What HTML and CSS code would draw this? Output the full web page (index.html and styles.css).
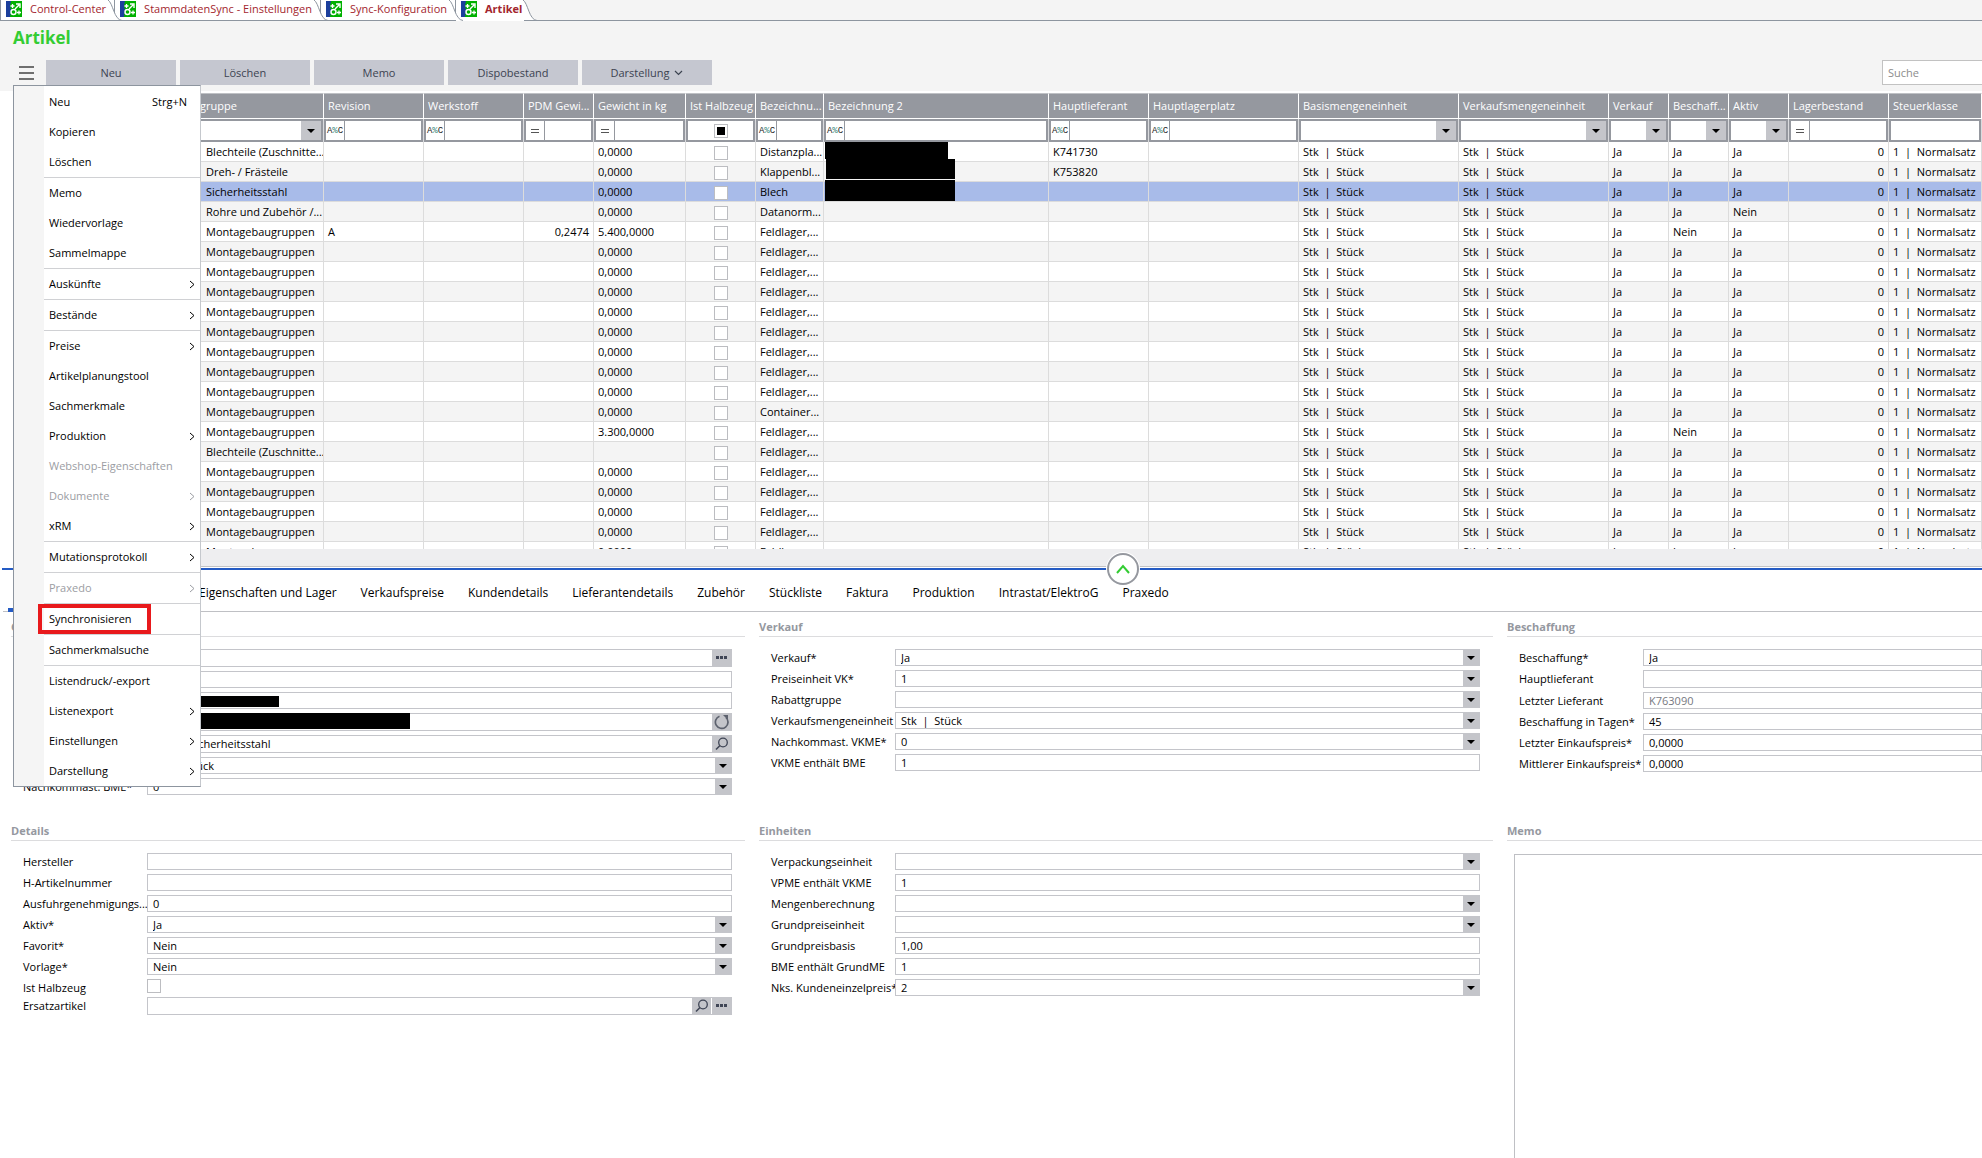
FILE: index.html
```html
<!DOCTYPE html>
<html lang="de">
<head>
    <meta charset="UTF-8">
    <title>Artikel</title>
    <link rel="stylesheet" href="styles.css">
</head>
<body>
<svg class="defs" aria-hidden="true">
    <symbol id="logo" viewBox="0 0 16 16">
        <rect width="16" height="16" fill="#00b000"/>
        <path d="M0 0h5l-1 5 1 4-1 7H0z" fill="#1c3f9c"/>
        <circle cx="7.500" cy="11" r="2.500" fill="none" stroke="#fff" stroke-width="1.400"/>
        <path d="M6.500 3v4M4.500 5h4M13 9.500v4M11 11.500h4" stroke="#fff" stroke-width="1.300"/>
        <path d="M9 8l4-4M10 3h4v4" fill="none" stroke="#fff" stroke-width="1.400"/>
    </symbol>
    <symbol id="slope" viewBox="0 0 14 21">
        <path d="M0 0C5 3 6 20 14 20H0z" fill="#fff"/>
        <path d="M0 0C5 3 6 20 14 20.500" fill="none" stroke="#8d959f"/>
    </symbol>
    <symbol id="chevron" viewBox="0 0 6 9">
        <path d="M1 1l4 3.500-4 3.500" fill="none" stroke="currentColor"/>
    </symbol>
    <symbol id="lens" viewBox="0 0 14 14">
        <circle cx="8" cy="5.500" r="4.300" fill="none" stroke="#3f4555" stroke-width="1.300"/>
        <path d="M5 8.500l-4 4" stroke="#3f4555" stroke-width="1.600"/>
    </symbol>
    <symbol id="dots" viewBox="0 0 12 4">
        <path d="M0 0h3v3H0zM4 0h3v3H4zM8 0h3v3H8z" fill="#3f4555"/>
    </symbol>
    <symbol id="reload" viewBox="0 0 16 16">
        <path d="M5.500 2.200a6.300 6.300 0 1 0 6.500 1.300" fill="none" stroke="#5d626e" stroke-width="1.700"/>
        <path d="M9 1h5v5z" fill="#5d626e"/>
    </symbol>
</svg>

<header>
    <nav class="tabs">
        <a href="#" class="tab"><svg class="logo"><use href="#logo"/></svg>Control-Center<svg class="slope"><use href="#slope"/></svg></a>
        <a href="#" class="tab"><svg class="logo"><use href="#logo"/></svg>StammdatenSync - Einstellungen<svg class="slope"><use href="#slope"/></svg></a>
        <a href="#" class="tab"><svg class="logo"><use href="#logo"/></svg>Sync-Konfiguration<svg class="slope"><use href="#slope"/></svg></a>
        <a href="#" class="tab active"><svg class="logo"><use href="#logo"/></svg>Artikel<svg class="slope"><use href="#slope"/></svg></a>
    </nav>
    <h1>Artikel</h1>
    <div class="toolbar">
        <button class="burger" aria-label="Menü"><span></span><span></span><span></span></button>
        <button>Neu</button>
        <button>Löschen</button>
        <button>Memo</button>
        <button>Dispobestand</button>
        <button>Darstellung <svg class="down" viewBox="0 0 9 6"><path d="M1 1l3.500 3.500L8 1" fill="none" stroke="currentColor" stroke-width="1.200"/></svg></button>
        <input class="search" type="text" placeholder="Suche" aria-label="Suche">
    </div>
</header>

<div class="menu" id="menu"></div>

<div class="grid">
    <table>
        <colgroup id="cols"></colgroup>
        <thead>
            <tr id="heads"></tr>
            <tr class="filter" id="filters"></tr>
        </thead>
        <tbody id="rows"></tbody>
    </table>
</div>

<div class="splitter">
    <button class="collapse" aria-label="Einklappen"><svg viewBox="0 0 14 10"><path d="M1 9l6-7 6 7" fill="none" stroke="#3c3" stroke-width="2"/></svg></button>
</div>

<nav class="pages">
    <a href="#" class="current">Allgemein</a>
    <a href="#">Eigenschaften und Lager</a>
    <a href="#">Verkaufspreise</a>
    <a href="#">Kundendetails</a>
    <a href="#">Lieferantendetails</a>
    <a href="#">Zubehör</a>
    <a href="#">Stückliste</a>
    <a href="#">Faktura</a>
    <a href="#">Produktion</a>
    <a href="#">Intrastat/ElektroG</a>
    <a href="#">Praxedo</a>
</nav>

<main id="main"></main>

<script>
    // name, width, filter type
    const columns = [
        ['gruppe', 311, 'combo'],
        ['Revision', 100, 'text'],
        ['Werkstoff', 100, 'text'],
        ['PDM Gewi...', 70, 'number'],
        ['Gewicht in kg', 92, 'number'],
        ['Ist Halbzeug', 70, 'check'],
        ['Bezeichnu...', 68, 'text'],
        ['Bezeichnung 2', 225, 'text'],
        ['Hauptlieferant', 100, 'text'],
        ['Hauptlagerplatz', 150, 'text'],
        ['Basismengeneinheit', 160, 'combo'],
        ['Verkaufsmengeneinheit', 150, 'combo'],
        ['Verkauf', 60, 'combo'],
        ['Beschaff...', 60, 'combo'],
        ['Aktiv', 60, 'combo'],
        ['Lagerbestand', 100, 'number'],
        ['Steuerklasse', 0, 'plain']
    ];

    const filters = {
        combo: name => `<div class="combo"><select aria-label="${name}"><option></option></select></div>`,
        text: name => `<div class="op"><button class="abc">A<i>%</i>C</button><input type="text" aria-label="${name}"></div>`,
        number: name => `<div class="op"><button class="eq" aria-label="gleich"></button><input type="text" aria-label="${name}"></div>`,
        check: name => `<div class="tri"><input type="checkbox" class="mixed" aria-label="${name}"></div>`,
        plain: name => `<div class="op"><input type="text" aria-label="${name}"></div>`
    };

    const m = 'Montagebaugruppen';
    const b = 'Blechteile (Zuschnitte...';
    const f = 'Feldlager,...';
    const articles = [
        {group: b, name: 'Distanzpla...', supplier: 'K741730', hide: 'first'},
        {group: 'Dreh- / Frästeile', name: 'Klappenbl...', supplier: 'K753820', hide: 'second'},
        {group: 'Sicherheitsstahl', name: 'Blech', hide: 'third', selected: true},
        {group: 'Rohre und Zubehör /...', name: 'Datanorm...', active: 'Nein'},
        {group: m, name: f, revision: 'A', pdm: '0,2474', kg: '5.400,0000', purchase: 'Nein'},
        {}, {}, {}, {}, {}, {}, {}, {},
        {name: 'Container...'},
        {kg: '3.300,0000', purchase: 'Nein'},
        {group: b, kg: ''},
        {}, {}, {}, {}, {}
    ];

    for (let [name, width, type] of columns) {
        document.getElementById('cols').innerHTML += width ? `<col style="width:${width}px">` : '<col>';
        document.getElementById('heads').innerHTML += `<th>${name}</th>`;
        document.getElementById('filters').innerHTML += `<td>${filters[type](name)}</td>`;
    }

    let rows = '';
    for (let a of articles) {
        rows += `<tr${a.selected ? ' class="selected"' : ''}>
            <td>${a.group ?? m}</td><td>${a.revision ?? ''}</td><td></td><td class="right">${a.pdm ?? ''}</td>
            <td>${a.kg ?? '0,0000'}</td><td class="mid"><input type="checkbox" aria-label="Ist Halbzeug"></td>
            <td>${a.name ?? f}</td><td class="over">${a.hide ? `<span class="redacted ${a.hide}"></span>` : ''}</td>
            <td>${a.supplier ?? ''}</td><td></td><td>Stk&nbsp; |&nbsp; Stück</td><td>Stk&nbsp; |&nbsp; Stück</td>
            <td>Ja</td><td>${a.purchase ?? 'Ja'}</td><td>${a.active ?? 'Ja'}</td>
            <td class="right">0</td><td>1&nbsp; |&nbsp; Normalsatz</td></tr>`;
    }
    document.getElementById('rows').innerHTML = rows;

    // > has a submenu, ! is disabled, - is a separator
    const menu = ['Neu', 'Kopieren', 'Löschen', '-', 'Memo', 'Wiedervorlage', 'Sammelmappe', '-', 'Auskünfte>', '-',
        'Bestände>', '-', 'Preise>', 'Artikelplanungstool', 'Sachmerkmale', 'Produktion>', 'Webshop-Eigenschaften!',
        'Dokumente>!', 'xRM>', '-', 'Mutationsprotokoll>', '-', 'Praxedo>!', '-', 'Synchronisieren', '-',
        'Sachmerkmalsuche', '-', 'Listendruck/-export', 'Listenexport>', 'Einstellungen>', 'Darstellung>'];
    let items = '';
    for (let el of menu) {
        if (el === '-') {
            items += '<hr>';
            continue;
        }
        const name = el.replace(/[>!]/g, '');
        items += `<button${el.includes('!') ? ' disabled' : ''}${name === 'Synchronisieren' ? ' class="marked"' : ''}>${name}`;
        if (el.includes('>')) items += '<svg class="chevron"><use href="#chevron"/></svg>';
        if (name === 'Neu') items += '<kbd>Strg+N</kbd>';
        items += '</button>';
    }
    document.getElementById('menu').innerHTML = items;

    // label, type, value
    const sections = [
        ['Grunddaten', [
            ['Artikelnummer', 'dots', ''],
            ['Suchbegriff', 'text', ''],
            ['Bezeichnung', 'text', '', 'short'],
            ['Bezeichnung 2', 'reload', '', 'long'],
            ['Artikelgruppe', 'lens', '100\u00a0 |\u00a0 Sicherheitsstahl'],
            ['Basismengeneinheit', 'combo', 'Stk\u00a0 |\u00a0 Stück'],
            ['Nachkommast. BME*', 'combo', '0']
        ]],
        ['Verkauf', [
            ['Verkauf*', 'combo', 'Ja'],
            ['Preiseinheit VK*', 'combo', '1'],
            ['Rabattgruppe', 'combo', ''],
            ['Verkaufsmengeneinheit', 'combo', 'Stk\u00a0 |\u00a0 Stück'],
            ['Nachkommast. VKME*', 'combo', '0'],
            ['VKME enthält BME', 'text', '1']
        ]],
        ['Beschaffung', [
            ['Beschaffung*', 'text', 'Ja'],
            ['Hauptlieferant', 'tall', ''],
            ['Letzter Lieferant', 'readonly', 'K763090'],
            ['Beschaffung in Tagen*', 'text', '45'],
            ['Letzter Einkaufspreis*', 'text', '0,0000'],
            ['Mittlerer Einkaufspreis*', 'text', '0,0000']
        ]],
        ['Details', [
            ['Hersteller', 'text', ''],
            ['H-Artikelnummer', 'text', ''],
            ['Ausfuhrgenehmigungs...', 'text', '0'],
            ['Aktiv*', 'combo', 'Ja'],
            ['Favorit*', 'combo', 'Nein'],
            ['Vorlage*', 'combo', 'Nein'],
            ['Ist Halbzeug', 'check', ''],
            ['Ersatzartikel', 'both', '']
        ]],
        ['Einheiten', [
            ['Verpackungseinheit', 'combo', ''],
            ['VPME enthält VKME', 'text', '1'],
            ['Mengenberechnung', 'combo', ''],
            ['Grundpreiseinheit', 'combo', ''],
            ['Grundpreisbasis', 'text', '1,00'],
            ['BME enthält GrundME', 'text', '1'],
            ['Nks. Kundeneinzelpreis*', 'combo', '2']
        ]]
    ];

    const icon = name => `<button class="icon" aria-label="${name}"><svg class="${name}"><use href="#${name}"/></svg></button>`;

    function control(id, type, value) {
        const input = `<input type="text" id="${id}" value="${value}"${type === 'readonly' ? ' readonly' : ''}>`;
        if (type === 'combo') return `<div class="combo"><select id="${id}"><option>${value}</option></select></div>`;
        if (type === 'check') return `<input type="checkbox" id="${id}">`;
        if (type === 'both') return `<div class="field tall">${input}${icon('lens')}${icon('dots')}</div>`;
        if (type === 'text' || type === 'readonly') return `<div class="field">${input}</div>`;
        if (type === 'tall') return `<div class="field tall">${input}</div>`;
        return `<div class="field tall">${input}${icon(type)}</div>`;
    }

    let html = '';
    sections.forEach(([title, fields], s) => {
        html += `<section><h2>${title}</h2><div class="form">`;
        fields.forEach(([label, type, value, hide], i) => {
            const id = `f${s}-${i}`;
            html += `<div class="row"><label for="${id}">${label}</label>${control(id, type, value)}`;
            if (hide) html += `<span class="redacted ${hide}"></span>`;
            html += '</div>';
        });
        html += '</div></section>';
    });
    html += '<section class="memo"><h2><label for="memo">Memo</label></h2><textarea id="memo"></textarea></section>';
    document.getElementById('main').innerHTML = html;
</script>
</body>
</html>
```
FILE: styles.css
```css
*, *::before, *::after {
    box-sizing: border-box;
    padding: 0;
    margin: 0;
}

body {
    display: flex;
    flex-direction: column;
    position: relative;
    height: 100vh;
    overflow: hidden;
    background: white;
    color: black;
    font-family: "Open Sans", "Noto Sans", sans-serif;
    font-size: 11px;
    line-height: 16px;
}

button, input, select, textarea {
    font: inherit;
    color: inherit;
    border: 0;
    border-radius: 0;
    appearance: none;
    outline: none;
}

a {
    color: inherit;
    text-decoration: none;
}

svg {
    display: block;
}

.defs {
    position: absolute;
    width: 0;
    height: 0;
}

/* header */
header {
    flex: none;
    height: 91px;
    background: #f4f4f4;
}

.tabs {
    display: flex;
    height: 21px;
    border-bottom: 1px solid #8d959f;
}

.tab {
    position: relative;
    display: flex;
    gap: 8px;
    padding: 1px 8px 0 5px;
    border-left: 1px solid #8d959f;
    background: white;
    color: #a3262e;
}

.tab.active {
    height: 21px;
    padding-right: 2px;
    font-weight: bold;
}

.logo {
    width: 16px;
    height: 16px;
}

.slope {
    position: absolute;
    top: 0;
    right: -8px;
    z-index: 1;
    width: 14px;
    height: 21px;
}

.active .slope {
    right: -13px;
}

h1 {
    height: 39px;
    padding: 5px 0 0 13px;
    color: #3c3;
    font-size: 17px;
    line-height: 24px;
}

.toolbar {
    display: flex;
    gap: 4px;
}

.toolbar button {
    display: flex;
    align-items: center;
    justify-content: center;
    gap: 5px;
    width: 130px;
    height: 25px;
    background: #c5c7d0;
    color: #3c4350;
}

.toolbar .burger {
    flex-direction: column;
    gap: 4px;
    width: 24px;
    margin-left: 14px;
    background: none;
}

.toolbar .burger + button {
    margin-left: 4px;
}

.burger span {
    width: 15px;
    height: 2px;
    background: #6f6f6f;
}

.down {
    width: 9px;
    height: 6px;
}

.search {
    width: 100px;
    height: 25px;
    margin-left: auto;
    padding-left: 5px;
    border: 1px solid #c2c2c2;
    border-right: 0;
    background: white;
}

.search::placeholder {
    color: #8c8c8c;
}

/* menu */
.menu {
    position: absolute;
    top: 85px;
    left: 13px;
    z-index: 5;
    width: 188px;
    padding-top: 1px;
    border: 1px solid #8d959f;
    border-right-color: #c5c8cd;
    background: linear-gradient(to right, #f5f5f5 30px, white 30px);
}

.menu button {
    position: relative;
    display: flex;
    align-items: center;
    justify-content: space-between;
    width: 100%;
    height: 30px;
    padding: 0 5px 0 35px;
    background: none;
}

.menu button:disabled {
    color: #9b9da3;
}

.menu hr {
    margin-left: 30px;
    border: 0;
    border-top: 1px solid #d0d1d4;
}

.menu kbd {
    margin-right: 8px;
    font: inherit;
}

.menu .marked::after {
    content: "";
    position: absolute;
    top: 0;
    left: 24px;
    width: 113px;
    height: 30px;
    border: 4px solid #e8191c;
}

.chevron {
    width: 6px;
    height: 9px;
}

/* grid */
.grid {
    flex: none;
    height: 458px;
    margin-left: 13px;
    padding-top: 2px;
    overflow: hidden;
}

table {
    width: 100%;
    table-layout: fixed;
    border-collapse: separate;
    border-spacing: 0;
}

th, td {
    overflow: hidden;
    white-space: nowrap;
}

th {
    height: 26px;
    padding-left: 4px;
    border-top: 1px solid #bfc1c5;
    border-right: 1px solid white;
    border-bottom: 1px solid white;
    background: #95989f;
    color: white;
    font-weight: normal;
    text-align: left;
}

th:first-child {
    padding-left: 187px;
}

.filter td {
    height: 23px;
    padding: 2px;
    border-right: 1px solid #dadbde;
    background: #95989f;
}

.filter td > div {
    height: 19px;
}

tbody td {
    height: 20px;
    padding: 0 4px;
    border-right: 1px solid #dcdcdc;
    border-bottom: 1px solid #dcdcdc;
}

tbody td:first-child {
    padding-left: 193px;
    padding-right: 0;
}

tbody tr:nth-child(even) {
    background: #f4f4f4;
}

tbody .selected {
    background: #a8bbe9;
}

.right {
    text-align: right;
}

.mid {
    text-align: center;
}

tbody .over {
    position: relative;
    overflow: visible;
}

input[type=checkbox] {
    width: 14px;
    height: 14px;
    border: 1px solid #bcbdc1;
    background: white;
    vertical-align: middle;
}

.op {
    display: flex;
    background: white;
}

.op input {
    flex: 1;
    min-width: 0;
    padding-left: 2px;
    background: none;
}

.op button {
    display: flex;
    align-items: center;
    justify-content: center;
    width: 19px;
    border-right: 1px solid #95989f;
    background: none;
}

.op .abc {
    color: #222;
    font-family: "Liberation Mono", monospace;
    font-size: 9px;
}

.abc i {
    color: #3a8a7c;
    font-style: normal;
}

.eq::before {
    content: "";
    width: 8px;
    height: 4px;
    border: solid #555;
    border-width: 1px 0;
}

.tri {
    display: flex;
    align-items: center;
    justify-content: center;
    background: white;
}

.tri .mixed {
    border-color: #bcbdc1;
    background: black;
    background-clip: content-box;
    padding: 2px;
}

.combo {
    display: flex;
    position: relative;
    flex: 1;
    height: 17px;
    border: 1px solid #c4c5ca;
    background: white;
}

.filter .combo {
    border: 0;
}

.combo select {
    flex: 1;
    min-width: 0;
    padding-left: 5px;
    background: none;
}

.combo::before {
    content: "";
    position: absolute;
    top: 0;
    right: 0;
    bottom: 0;
    width: 16px;
    background: #c4c5ca;
}

.filter .combo::before {
    width: 20px;
}

.combo::after {
    content: "";
    position: absolute;
    top: calc(50% - 2px);
    right: 4px;
    border: 4px solid transparent;
    border-top-color: black;
    border-bottom: 0;
}

.filter .combo::after {
    right: 6px;
}

/* splitter and page tabs */
.splitter {
    position: relative;
    flex: none;
    height: 21px;
    margin-left: 2px;
    border-bottom: 2px solid #245bc4;
    background: linear-gradient(white, white) 0 0 / 11px 19px no-repeat,
        linear-gradient(#eeeef0 17px, #c2c3c6 17px, #c2c3c6 18px, white 18px);
}

.collapse {
    position: absolute;
    top: 4px;
    left: 1105px;
    display: flex;
    align-items: center;
    justify-content: center;
    width: 32px;
    height: 32px;
    border: 2px solid #95989f;
    border-radius: 50%;
    background: white;
    box-shadow: 0 0 0 1px white;
}

.collapse svg {
    width: 14px;
    height: 10px;
}

.pages {
    display: flex;
    flex: none;
    gap: 24px;
    height: 42px;
    margin-left: 3px;
    padding: 0 5px;
    border-bottom: 1px solid #bfc0c4;
    font-size: 12px;
    line-height: 46px;
}

.pages .current {
    width: 167px;
    height: 42px;
    padding-left: 15px;
    border-bottom: 4px solid #245bc4;
}

/* forms */
main {
    display: grid;
    flex: 1;
    grid-template-columns: 734fr 734fr 475fr;
    grid-template-rows: auto 1fr;
    gap: 21px 14px;
    min-height: 0;
    padding-left: 11px;
}

section {
    display: flex;
    flex-direction: column;
    min-width: 0;
}

h2 {
    height: 25px;
    padding-top: 7px;
    border-bottom: 1px solid #dcdcde;
    color: #95989f;
    font-size: 11px;
}

.form {
    display: flex;
    flex-direction: column;
    gap: 4px;
    padding: 12px 13px 0 12px;
}

section:nth-child(3) .form {
    padding-right: 0;
}

.row {
    display: flex;
    position: relative;
}

.row label {
    width: 124px;
    height: 14px;
    line-height: 18px;
    white-space: nowrap;
}

.field {
    display: flex;
    flex: 1;
    height: 17px;
    border: 1px solid #c4c5ca;
}

.field.tall {
    height: 18px;
}

.field input {
    flex: 1;
    min-width: 0;
    padding-left: 5px;
    background: none;
}

.field input:read-only {
    color: #77797f;
}

.icon {
    display: flex;
    align-items: center;
    justify-content: center;
    width: 19px;
    background: #c4c5ca;
}

.icon + .icon {
    width: 20px;
    border-left: 1px solid white;
}

.lens {
    width: 14px;
    height: 14px;
}

.dots {
    width: 12px;
    height: 4px;
}

.reload {
    width: 16px;
    height: 16px;
}

.memo textarea {
    flex: 1;
    margin: 13px 0 0 7px;
    border: 1px solid #bfc0c4;
    border-width: 1px 0 0 1px;
    resize: none;
}

/* blacked out values */
.redacted {
    position: absolute;
    z-index: 2;
    background: black;
}

.first {
    top: 0;
    left: 1px;
    width: 123px;
    height: 17px;
}

.second {
    top: -3px;
    left: 2px;
    width: 129px;
    height: 20px;
}

.third {
    top: -2px;
    left: 1px;
    width: 130px;
    height: 21px;
}

.short {
    top: 4px;
    left: 174px;
    width: 82px;
    height: 11px;
}

.long {
    top: 0;
    left: 174px;
    width: 213px;
    height: 16px;
}
```
